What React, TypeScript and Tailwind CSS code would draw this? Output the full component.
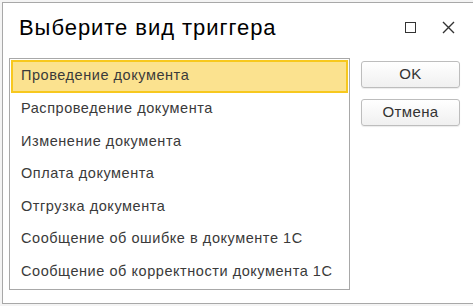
const triggers = [
  "Проведение документа",
  "Распроведение документа",
  "Изменение документа",
  "Оплата документа",
  "Отгрузка документа",
  "Сообщение об ошибке в документе 1С",
  "Сообщение об корректности документа 1С",
];

function DialogButton({ label }: { label: string }) {
  return (
    <button className="h-[27px] w-[99px] rounded-[3px] border border-[#bdbdbd] bg-gradient-to-b from-white to-[#f0f0f0] text-[15px] tracking-[0.4px] text-[#333] shadow-[0_1px_1px_rgba(0,0,0,0.08)]">
      {label}
    </button>
  );
}

export default function App() {
  const selected = 0;

  return (
    <div className="h-[306px] w-[473px] overflow-hidden bg-[#f4f4f4] pl-[2px] pt-[2px] font-['Liberation_Sans',Arial,sans-serif]">
      <div className="flex h-[302px] flex-col border-b border-l border-t border-[#a8a8a8] bg-white">
        <div className="flex h-[48px] items-center pl-[16px] pr-[18px]">
          <h1 className="flex-1 pt-[1px] text-[22px] leading-none tracking-[0.95px] text-black">
            Выберите вид триггера
          </h1>
          <div className="mr-[26px] h-[11px] w-[11px] border-[1.5px] border-[#333]" />
          <svg width="13" height="13" viewBox="0 0 13 13">
            <path d="M1 1 L12 12 M12 1 L1 12" stroke="#333" strokeWidth="1.4" />
          </svg>
        </div>
        <div className="mt-[7px] flex gap-[11px] pl-[6px]">
          <div className="flex h-[232px] w-[341px] flex-col border border-[#a8a8a8] p-px">
            {triggers.map((t, i) => (
              <div
                key={t}
                className={
                  i === selected
                    ? "flex h-[33px] items-center border-2 border-[#f7c81e] bg-[#fbe28f] pl-[8px] text-[14.5px] tracking-[0.55px] text-[#3a3a3a]"
                    : "flex h-[33px] items-center pl-[10px] text-[14.5px] tracking-[0.55px] text-[#3a3a3a]"
                }
              >
                {t}
              </div>
            ))}
          </div>
          <div className="flex flex-col gap-[11px] pt-[3px]">
            <DialogButton label="OK" />
            <DialogButton label="Отмена" />
          </div>
        </div>
      </div>
    </div>
  );
}
